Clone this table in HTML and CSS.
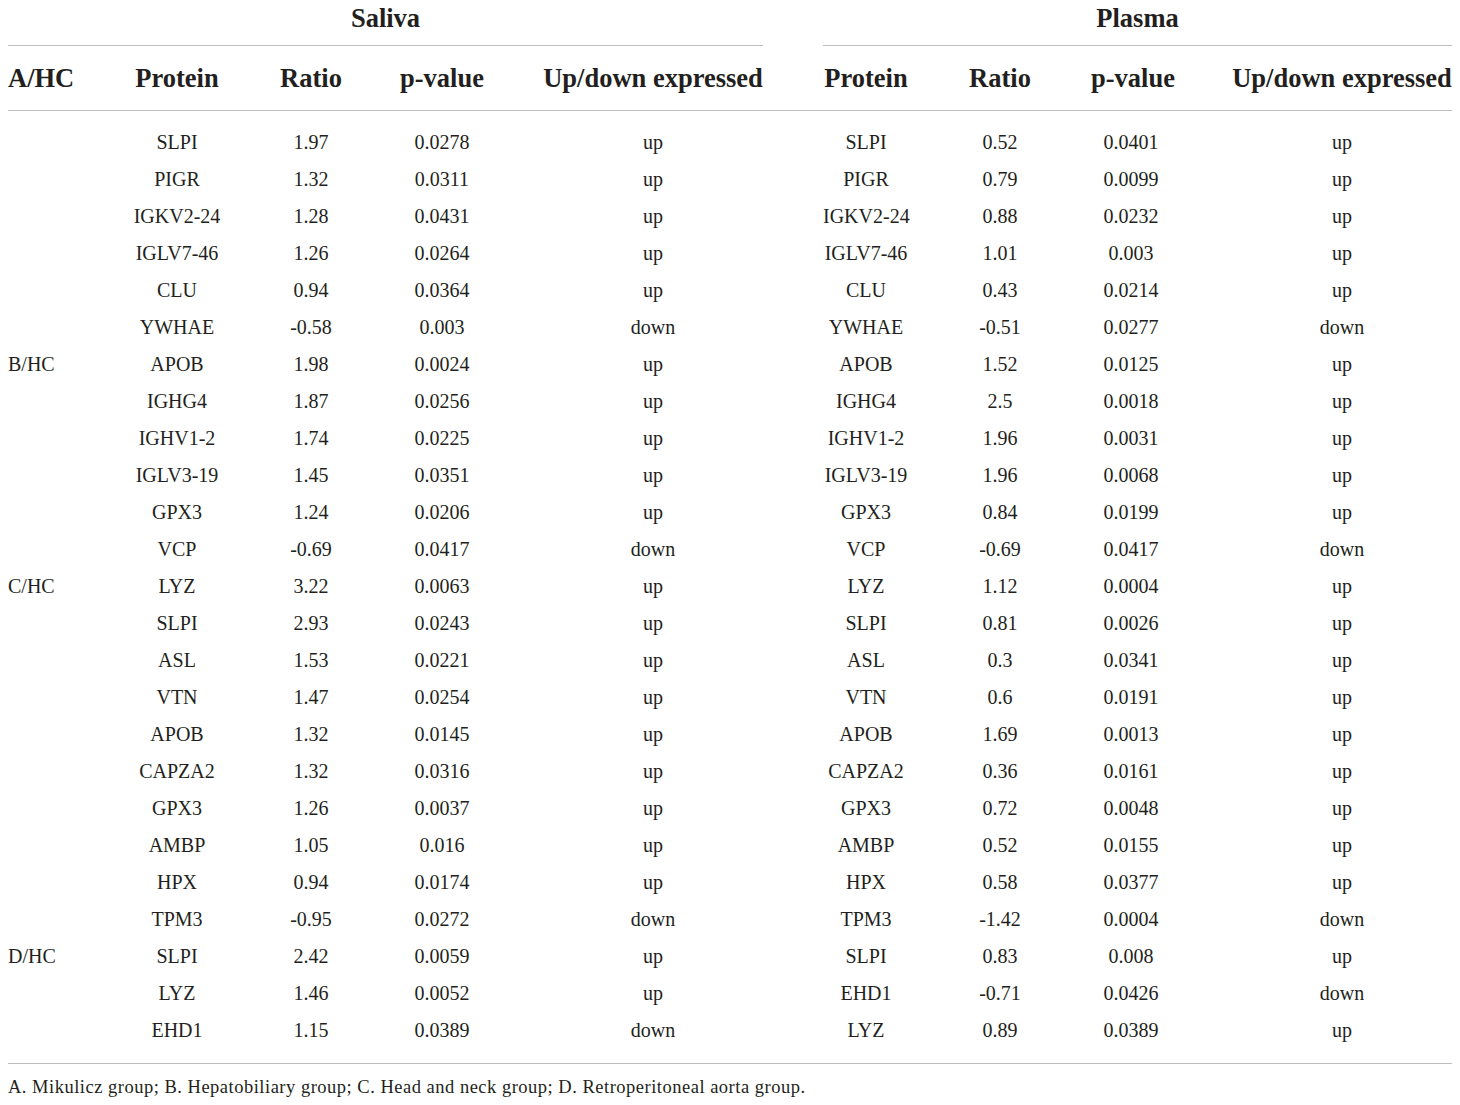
FILE: index.html
```html
<!DOCTYPE html>
<html lang="en">
<head>
    <meta charset="UTF-8">
    <title>Differentially expressed proteins</title>
    <link rel="stylesheet" href="styles.css">
</head>
<body>
    <table class="data-table">
        <colgroup>
            <col class="c-group">
            <col class="c-protein">
            <col class="c-ratio">
            <col class="c-pvalue">
            <col class="c-updown">
            <col class="c-gap">
            <col class="c-protein2">
            <col class="c-ratio2">
            <col class="c-pvalue2">
            <col class="c-updown2">
        </colgroup>
        <thead>
            <tr class="title-row">
                <th colspan="5" class="sample">Saliva</th>
                <th class="gap"></th>
                <th colspan="4" class="sample">Plasma</th>
            </tr>
            <tr class="head-row">
                <th class="group">A/HC</th>
                <th>Protein</th>
                <th>Ratio</th>
                <th>p-value</th>
                <th class="updown">Up/down expressed</th>
                <th class="gap"></th>
                <th>Protein</th>
                <th>Ratio</th>
                <th>p-value</th>
                <th class="updown2">Up/down expressed</th>
            </tr>
        </thead>
        <tbody>
            <tr><td class="group"></td><td>SLPI</td><td>1.97</td><td>0.0278</td><td class="updown">up</td><td></td><td>SLPI</td><td>0.52</td><td>0.0401</td><td class="updown2">up</td></tr>
            <tr><td class="group"></td><td>PIGR</td><td>1.32</td><td>0.0311</td><td class="updown">up</td><td></td><td>PIGR</td><td>0.79</td><td>0.0099</td><td class="updown2">up</td></tr>
            <tr><td class="group"></td><td>IGKV2-24</td><td>1.28</td><td>0.0431</td><td class="updown">up</td><td></td><td>IGKV2-24</td><td>0.88</td><td>0.0232</td><td class="updown2">up</td></tr>
            <tr><td class="group"></td><td>IGLV7-46</td><td>1.26</td><td>0.0264</td><td class="updown">up</td><td></td><td>IGLV7-46</td><td>1.01</td><td>0.003</td><td class="updown2">up</td></tr>
            <tr><td class="group"></td><td>CLU</td><td>0.94</td><td>0.0364</td><td class="updown">up</td><td></td><td>CLU</td><td>0.43</td><td>0.0214</td><td class="updown2">up</td></tr>
            <tr><td class="group"></td><td>YWHAE</td><td>-0.58</td><td>0.003</td><td class="updown">down</td><td></td><td>YWHAE</td><td>-0.51</td><td>0.0277</td><td class="updown2">down</td></tr>
            <tr><td class="group">B/HC</td><td>APOB</td><td>1.98</td><td>0.0024</td><td class="updown">up</td><td></td><td>APOB</td><td>1.52</td><td>0.0125</td><td class="updown2">up</td></tr>
            <tr><td class="group"></td><td>IGHG4</td><td>1.87</td><td>0.0256</td><td class="updown">up</td><td></td><td>IGHG4</td><td>2.5</td><td>0.0018</td><td class="updown2">up</td></tr>
            <tr><td class="group"></td><td>IGHV1-2</td><td>1.74</td><td>0.0225</td><td class="updown">up</td><td></td><td>IGHV1-2</td><td>1.96</td><td>0.0031</td><td class="updown2">up</td></tr>
            <tr><td class="group"></td><td>IGLV3-19</td><td>1.45</td><td>0.0351</td><td class="updown">up</td><td></td><td>IGLV3-19</td><td>1.96</td><td>0.0068</td><td class="updown2">up</td></tr>
            <tr><td class="group"></td><td>GPX3</td><td>1.24</td><td>0.0206</td><td class="updown">up</td><td></td><td>GPX3</td><td>0.84</td><td>0.0199</td><td class="updown2">up</td></tr>
            <tr><td class="group"></td><td>VCP</td><td>-0.69</td><td>0.0417</td><td class="updown">down</td><td></td><td>VCP</td><td>-0.69</td><td>0.0417</td><td class="updown2">down</td></tr>
            <tr><td class="group">C/HC</td><td>LYZ</td><td>3.22</td><td>0.0063</td><td class="updown">up</td><td></td><td>LYZ</td><td>1.12</td><td>0.0004</td><td class="updown2">up</td></tr>
            <tr><td class="group"></td><td>SLPI</td><td>2.93</td><td>0.0243</td><td class="updown">up</td><td></td><td>SLPI</td><td>0.81</td><td>0.0026</td><td class="updown2">up</td></tr>
            <tr><td class="group"></td><td>ASL</td><td>1.53</td><td>0.0221</td><td class="updown">up</td><td></td><td>ASL</td><td>0.3</td><td>0.0341</td><td class="updown2">up</td></tr>
            <tr><td class="group"></td><td>VTN</td><td>1.47</td><td>0.0254</td><td class="updown">up</td><td></td><td>VTN</td><td>0.6</td><td>0.0191</td><td class="updown2">up</td></tr>
            <tr><td class="group"></td><td>APOB</td><td>1.32</td><td>0.0145</td><td class="updown">up</td><td></td><td>APOB</td><td>1.69</td><td>0.0013</td><td class="updown2">up</td></tr>
            <tr><td class="group"></td><td>CAPZA2</td><td>1.32</td><td>0.0316</td><td class="updown">up</td><td></td><td>CAPZA2</td><td>0.36</td><td>0.0161</td><td class="updown2">up</td></tr>
            <tr><td class="group"></td><td>GPX3</td><td>1.26</td><td>0.0037</td><td class="updown">up</td><td></td><td>GPX3</td><td>0.72</td><td>0.0048</td><td class="updown2">up</td></tr>
            <tr><td class="group"></td><td>AMBP</td><td>1.05</td><td>0.016</td><td class="updown">up</td><td></td><td>AMBP</td><td>0.52</td><td>0.0155</td><td class="updown2">up</td></tr>
            <tr><td class="group"></td><td>HPX</td><td>0.94</td><td>0.0174</td><td class="updown">up</td><td></td><td>HPX</td><td>0.58</td><td>0.0377</td><td class="updown2">up</td></tr>
            <tr><td class="group"></td><td>TPM3</td><td>-0.95</td><td>0.0272</td><td class="updown">down</td><td></td><td>TPM3</td><td>-1.42</td><td>0.0004</td><td class="updown2">down</td></tr>
            <tr><td class="group">D/HC</td><td>SLPI</td><td>2.42</td><td>0.0059</td><td class="updown">up</td><td></td><td>SLPI</td><td>0.83</td><td>0.008</td><td class="updown2">up</td></tr>
            <tr><td class="group"></td><td>LYZ</td><td>1.46</td><td>0.0052</td><td class="updown">up</td><td></td><td>EHD1</td><td>-0.71</td><td>0.0426</td><td class="updown2">down</td></tr>
            <tr><td class="group"></td><td>EHD1</td><td>1.15</td><td>0.0389</td><td class="updown">down</td><td></td><td>LYZ</td><td>0.89</td><td>0.0389</td><td class="updown2">up</td></tr>
        </tbody>
    </table>
    <p class="note">A. Mikulicz group; B. Hepatobiliary group; C. Head and neck group; D. Retroperitoneal aorta group.</p>
</body>
</html>
```

FILE: styles.css
```css
/* Seite */
body {
    margin: 0 8px;
    background: #fff;
    color: #231f20;
    font-family: 'Liberation Serif', 'Times New Roman', serif;
}

/* Tabelle */
.data-table {
    width: 1444px;
    border-collapse: collapse;
    table-layout: fixed;
}

.c-group { width: 102px; }
.c-protein { width: 134px; }
.c-ratio { width: 134px; }
.c-pvalue { width: 128px; }
.c-updown { width: 257px; }
.c-gap { width: 60px; }
.c-protein2 { width: 86px; }
.c-ratio2 { width: 182px; }
.c-pvalue2 { width: 80px; }
.c-updown2 { width: 281px; }

th, td {
    padding: 0;
    text-align: center;
    white-space: nowrap;
}

th {
    font-size: 26.5px;
    font-weight: bold;
}

.title-row th {
    height: 42px;
    vertical-align: top;
    padding-top: 3px;
    line-height: 30px;
}

.title-row .sample {
    border-bottom: 1px solid #bdbdbd;
}

.head-row th {
    height: 64px;
    border-bottom: 1px solid #bdbdbd;
}

td {
    font-size: 20px;
    height: 37px;
    line-height: 24px;
}

.group {
    text-align: left;
}

.updown {
    padding-left: 37px;
}

.updown2 {
    padding-left: 61px;
}

tbody tr:first-child td {
    padding-top: 12px;
}

tbody tr:last-child td {
    padding-bottom: 15px;
    border-bottom: 1px solid #bdbdbd;
}

/* Fußnote */
.note {
    margin: 13px 0 0;
    font-size: 18.5px;
    letter-spacing: 0.5px;
}
```
